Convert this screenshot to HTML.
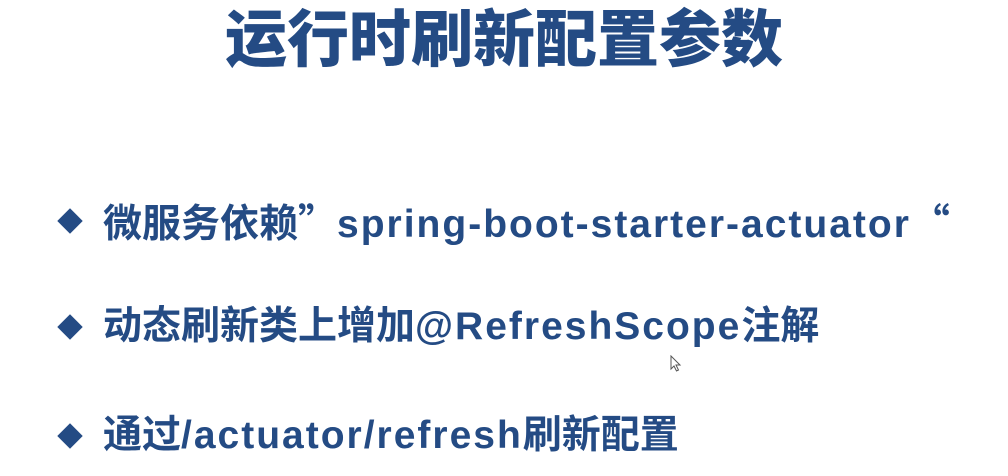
<!DOCTYPE html>
<html><head><meta charset="utf-8"><style>
html,body{margin:0;padding:0;background:#fff;width:1008px;height:476px;overflow:hidden}
body{position:relative;font-family:"Liberation Sans","Noto Sans CJK SC",sans-serif;color:#244b84;font-weight:bold}
.t{position:absolute;left:0;width:1008px;text-align:center;top:-4px;font-size:62px;font-weight:900;line-height:76px;font-family:"Noto Sans CJK SC",sans-serif}
.l{position:absolute;left:103px;font-size:39px;line-height:44px;white-space:nowrap}
.e{letter-spacing:2px}
.q{font-family:"Noto Sans CJK SC",sans-serif}
.d{position:absolute;left:61px;width:18px;height:18px;background:#244b84;transform:rotate(45deg)}
</style></head><body>
<div class="t">运行时刷新配置参数</div>
<div class="d" style="top:212px"></div>
<div class="l" style="top:199px">微服务依赖<span class="q">”</span><span class="e">spring-boot-starter-actuator</span><span class="q">“</span></div>
<div class="d" style="top:318px"></div>
<div class="l" style="top:305px">动态刷新类上增加<span class="e">@RefreshScope</span>注解</div>
<div class="d" style="top:427px"></div>
<div class="l" style="top:414px">通过<span class="e">/actuator/refresh</span>刷新配置</div>
<svg style="position:absolute;left:670px;top:355px" width="12" height="18" viewBox="0 0 12 18"><path d="M1 1 L1 14 L4 11 L6.5 16 L8.5 15 L6 10 L10 10 Z" fill="#fff" stroke="#555" stroke-width="1"/></svg>
</body></html>
